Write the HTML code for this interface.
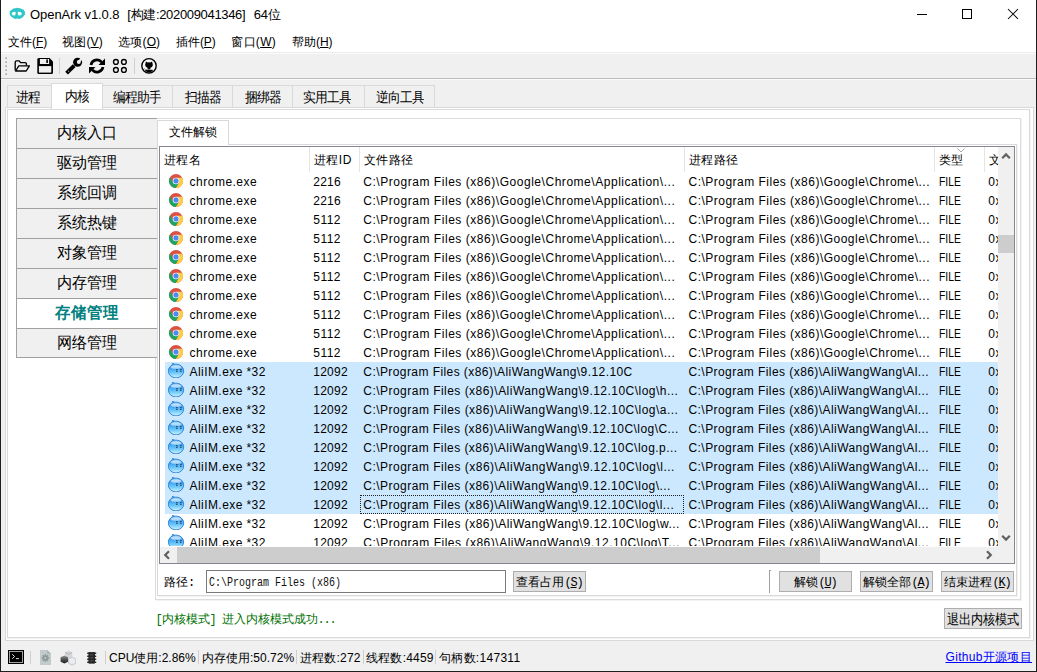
<!DOCTYPE html><html><head><meta charset="utf-8"><style>
*{box-sizing:border-box}
html,body{margin:0;padding:0}
body{width:1037px;height:672px;overflow:hidden;position:relative;background:#f0f0f0;font-family:"Liberation Sans",sans-serif;font-size:12px;color:#000}
.a{position:absolute}
.t{position:absolute;white-space:nowrap;line-height:1}
.m{font-family:"Liberation Mono",monospace;font-size:12px;letter-spacing:-1.2px}
u{text-decoration:underline;text-underline-offset:1px}
</style></head><body>

<div class="a" style="left:0px;top:0px;width:1px;height:672px;background:#1e1e1e"></div>
<div class="a" style="left:1036px;top:0px;width:1px;height:672px;background:#1e1e1e"></div>
<div class="a" style="left:0px;top:671px;width:1037px;height:1px;background:#1e1e1e"></div>
<div class="a" style="left:1px;top:0px;width:1035px;height:30px;background:#fff"></div>
<svg class="a" style="left:9px;top:7px" width="17" height="13" viewBox="0 0 17 13"><path d="M3 2.6Q4.5 1.2 6.5 1.3L8 0.7L10 1.2Q12 1.1 13.2 2.3L14.6 2.6L15.2 4.2L16.4 5L15.6 6.2L16.3 7.4L15 8.5Q14.3 10.6 12 11.3L10.5 11.9L8.2 11.5L6 11.9L4.4 11.1Q2.3 10.4 1.4 8.6L0.5 7.2L0.9 5.6L0.4 4.4L1.8 3.6Z" fill="#2ec6c9"/><path d="M2.6 6.6Q3.2 4.6 5.8 4.7L6.8 5.4L6.3 7.9Q4.8 8.9 3.3 8.1Z" fill="#fff"/><path d="M8.6 5.4L9.6 4.7Q12.3 4.6 12.9 6.6L12.3 8.1Q10.7 8.9 9.1 7.9Z" fill="#fff"/></svg>
<div class="t" style="left:30px;top:8px;font-size:13px;letter-spacing:-0.059px">OpenArk v1.0.8</div>
<div class="t" style="left:127.3px;top:8px;font-size:13px;letter-spacing:-0.330px">[构建:202009041346]</div>
<div class="t" style="left:253.8px;top:8px;font-size:13px;letter-spacing:-0.323px">64位</div>
<div class="a" style="left:917px;top:14px;width:10px;height:1px;background:#000"></div>
<div class="a" style="left:962px;top:9px;width:10px;height:10px;border:1px solid #000"></div>
<svg class="a" style="left:1007px;top:8px" width="12" height="12" viewBox="0 0 12 12"><path d="M1 1L11 11M11 1L1 11" stroke="#000" stroke-width="1.05"/></svg>
<div class="a" style="left:1px;top:30px;width:1035px;height:22px;background:#fff"></div>
<div class="t" style="left:8.3px;top:35.6px;;letter-spacing:-0.126px">文件(<u>F</u>)</div>
<div class="t" style="left:62.099999999999994px;top:35.6px;;letter-spacing:0.160px">视图(<u>V</u>)</div>
<div class="t" style="left:118.3px;top:35.6px;;letter-spacing:0.114px">选项(<u>O</u>)</div>
<div class="t" style="left:176.10000000000002px;top:35.6px;;letter-spacing:-0.080px">插件(<u>P</u>)</div>
<div class="t" style="left:231.3px;top:35.6px;;letter-spacing:0.274px">窗口(<u>W</u>)</div>
<div class="t" style="left:292.1px;top:35.6px;;letter-spacing:-0.074px">帮助(<u>H</u>)</div>
<div class="a" style="left:1px;top:52px;width:1035px;height:1px;background:#ececec"></div>
<div class="a" style="left:1px;top:53px;width:1035px;height:1px;background:#fbfbfb"></div>
<div class="a" style="left:1px;top:78px;width:1035px;height:1px;background:#bdbdbd"></div>
<div class="a" style="left:1px;top:79px;width:1035px;height:1px;background:#fafafa"></div>
<svg class="a" style="left:5px;top:57px" width="2" height="2" viewBox="0 0 2 2"><path d="M2 0V2H0Z" fill="#999"/><rect x="0" y="0" width="2" height="2" fill="#bbb" opacity="0.5"/></svg>
<svg class="a" style="left:5px;top:61px" width="2" height="2" viewBox="0 0 2 2"><path d="M2 0V2H0Z" fill="#999"/><rect x="0" y="0" width="2" height="2" fill="#bbb" opacity="0.5"/></svg>
<svg class="a" style="left:5px;top:65px" width="2" height="2" viewBox="0 0 2 2"><path d="M2 0V2H0Z" fill="#999"/><rect x="0" y="0" width="2" height="2" fill="#bbb" opacity="0.5"/></svg>
<svg class="a" style="left:5px;top:69px" width="2" height="2" viewBox="0 0 2 2"><path d="M2 0V2H0Z" fill="#999"/><rect x="0" y="0" width="2" height="2" fill="#bbb" opacity="0.5"/></svg>
<svg class="a" style="left:5px;top:73px" width="2" height="2" viewBox="0 0 2 2"><path d="M2 0V2H0Z" fill="#999"/><rect x="0" y="0" width="2" height="2" fill="#bbb" opacity="0.5"/></svg>
<div class="a" style="left:59px;top:58px;width:1px;height:16px;background:#cfcfcf"></div>
<div class="a" style="left:134px;top:58px;width:1px;height:16px;background:#cfcfcf"></div>
<svg class="a" style="left:10px;top:54px" width="24" height="24" viewBox="0 0 24 24"><g fill="none" stroke="#000" stroke-width="1.35" stroke-linejoin="round"><path d="M5.2 16.5V8.2Q5.2 6.8 6.6 6.8H9.2L10.6 8.6H15.2Q16.4 8.6 16.4 9.8V11.6"/><path d="M5.6 17L8.8 11.8H19.4L16.2 17Z"/></g></svg>
<svg class="a" style="left:37px;top:58px" width="16" height="16" viewBox="0 0 16 16"><path d="M0.3 1.6Q0.3 0 1.9 0H12.6L16 3.4V14.4Q16 16 14.4 16H1.9Q0.3 16 0.3 14.4Z" fill="#000"/><rect x="2.9" y="1" width="9.2" height="5" fill="#f0f0f0"/><rect x="9.3" y="1.4" width="1.6" height="3.6" fill="#000"/><rect x="1.9" y="8.1" width="12.4" height="6.5" fill="#f0f0f0"/></svg>
<svg class="a" style="left:62px;top:54px" width="24" height="24" viewBox="0 0 24 24"><path d="M4.6 19.2L12.2 11.6" stroke="#000" stroke-width="3.9"/><circle cx="15.6" cy="8.3" r="4.5" fill="#000"/><circle cx="16.8" cy="7.9" r="2.0" fill="#f0f0f0"/><path d="M15.95 7.2L19.8 2.58L21.5 3.98L17.65 8.6Z" fill="#f0f0f0"/><circle cx="6.6" cy="17.2" r="0.75" fill="#888"/></svg>
<svg class="a" style="left:85px;top:54px" width="24" height="24" viewBox="0 0 24 24"><g fill="none" stroke="#000" stroke-width="2.7"><path d="M5.99 10.94A6.1 6.1 0 0 1 16.67 8.08"/><path d="M18.01 13.06A6.1 6.1 0 0 1 7.33 15.92"/></g><path d="M20 4.5V11H13.5Z" fill="#000"/><path d="M4 19.5V13H10.5Z" fill="#000"/></svg>
<svg class="a" style="left:108px;top:54px" width="24" height="24" viewBox="0 0 24 24"><g fill="none" stroke="#000" stroke-width="1.35"><circle cx="7.9" cy="7.9" r="2.4"/><circle cx="15.9" cy="7.9" r="2.4"/><circle cx="7.9" cy="15.9" r="2.4"/><circle cx="15.9" cy="15.9" r="2.4"/></g></svg>
<svg class="a" style="left:137px;top:54px" width="24" height="24" viewBox="0 0 24 24"><circle cx="12" cy="11.8" r="7.2" fill="#f8f8f8" stroke="#000" stroke-width="1.4"/><path d="M8.7 8.4L9 7.4L10.7 8.4Q12 8.1 13.3 8.4L15 7.4L15.3 8.4Q16.3 10.4 15.5 12.3Q14.7 13.6 13.4 13.8V15.4H10.6V13.8Q9.3 13.6 8.5 12.3Q7.7 10.4 8.7 8.4Z" fill="#000"/><path d="M8 17Q12 19.6 16 17L15.2 15.6Q12 16.6 8.8 15.6Z" fill="#000"/><path d="M7 14.3Q8 15.8 10.4 15.6" stroke="#888" stroke-width="0.9" fill="none"/></svg>
<div class="a" style="left:5px;top:107px;width:1029px;height:534px;background:#fff;border:1px solid #d9d9d9"></div>
<div class="a" style="left:7px;top:109px;width:1023px;height:529px;border:1px solid #dadada"></div>
<div class="a" style="left:1030px;top:110px;width:1px;height:529px;background:#f2f2f2"></div>
<div class="a" style="left:8px;top:638px;width:1023px;height:1px;background:#f2f2f2"></div>
<div class="a" style="left:7px;top:85px;width:45px;height:22px;background:#f0f0f0;border:1px solid #d9d9d9;border-bottom:none"></div>
<div class="t" style="left:5px;top:90.5px;width:45px;text-align:center;font-size:12.3px;transform:scaleY(1.1);transform-origin:50% 0">进程</div>
<div class="a" style="left:51px;top:83px;width:52px;height:26px;background:#fff;border:1px solid #d9d9d9;border-bottom:none"></div>
<div class="t" style="left:51px;top:90px;width:52px;text-align:center;font-size:12.3px;transform:scaleY(1.1);transform-origin:50% 0">内核</div>
<div class="a" style="left:102px;top:85px;width:71px;height:22px;background:#f0f0f0;border:1px solid #d9d9d9;border-bottom:none"></div>
<div class="t" style="left:101px;top:90.5px;width:71px;text-align:center;font-size:12.3px;transform:scaleY(1.1);transform-origin:50% 0">编程助手</div>
<div class="a" style="left:172px;top:85px;width:61px;height:22px;background:#f0f0f0;border:1px solid #d9d9d9;border-bottom:none"></div>
<div class="t" style="left:172px;top:90.5px;width:61px;text-align:center;font-size:12.3px;transform:scaleY(1.1);transform-origin:50% 0">扫描器</div>
<div class="a" style="left:232px;top:85px;width:61px;height:22px;background:#f0f0f0;border:1px solid #d9d9d9;border-bottom:none"></div>
<div class="t" style="left:232px;top:90.5px;width:61px;text-align:center;font-size:12.3px;transform:scaleY(1.1);transform-origin:50% 0">捆绑器</div>
<div class="a" style="left:292px;top:85px;width:73px;height:22px;background:#f0f0f0;border:1px solid #d9d9d9;border-bottom:none"></div>
<div class="t" style="left:290.5px;top:90.5px;width:73px;text-align:center;font-size:12.3px;transform:scaleY(1.1);transform-origin:50% 0">实用工具</div>
<div class="a" style="left:364px;top:85px;width:71px;height:22px;background:#f0f0f0;border:1px solid #d9d9d9;border-bottom:none"></div>
<div class="t" style="left:364px;top:90.5px;width:71px;text-align:center;font-size:12.3px;transform:scaleY(1.1);transform-origin:50% 0">逆向工具</div>
<div class="a" style="left:155px;top:118px;width:866px;height:482px;border:1px solid #dcdcdc"></div>
<div class="a" style="left:1021px;top:119px;width:1px;height:482px;background:#f3f3f3"></div>
<div class="a" style="left:156px;top:600px;width:866px;height:1px;background:#f3f3f3"></div>
<div class="a" style="left:16px;top:118px;width:141px;height:240px;background:#f0f0f0;border:1px solid #a0a0a0;border-right:none"></div>
<div class="t" style="left:16px;top:124px;width:141px;text-align:center;font-size:15px;transform:scaleY(1.06);transform-origin:50% 0">内核入口</div>
<div class="a" style="left:17px;top:148px;width:140px;height:1px;background:#a0a0a0"></div>
<div class="t" style="left:16px;top:154px;width:141px;text-align:center;font-size:15px;transform:scaleY(1.06);transform-origin:50% 0">驱动管理</div>
<div class="a" style="left:17px;top:178px;width:140px;height:1px;background:#a0a0a0"></div>
<div class="t" style="left:16px;top:184px;width:141px;text-align:center;font-size:15px;transform:scaleY(1.06);transform-origin:50% 0">系统回调</div>
<div class="a" style="left:17px;top:208px;width:140px;height:1px;background:#a0a0a0"></div>
<div class="t" style="left:16px;top:214px;width:141px;text-align:center;font-size:15px;transform:scaleY(1.06);transform-origin:50% 0">系统热键</div>
<div class="a" style="left:17px;top:238px;width:140px;height:1px;background:#a0a0a0"></div>
<div class="t" style="left:16px;top:244px;width:141px;text-align:center;font-size:15px;transform:scaleY(1.06);transform-origin:50% 0">对象管理</div>
<div class="a" style="left:17px;top:268px;width:140px;height:1px;background:#a0a0a0"></div>
<div class="t" style="left:16px;top:274px;width:141px;text-align:center;font-size:15px;transform:scaleY(1.06);transform-origin:50% 0">内存管理</div>
<div class="a" style="left:17px;top:298px;width:140px;height:1px;background:#a0a0a0"></div>
<div class="a" style="left:17px;top:299px;width:140px;height:29px;background:#fff"></div>
<div class="t" style="left:16px;top:304px;width:141px;text-align:center;color:#008080;font-weight:bold;font-size:15.5px;transform:scaleY(1.04);transform-origin:50% 0">存储管理</div>
<div class="a" style="left:17px;top:328px;width:140px;height:1px;background:#a0a0a0"></div>
<div class="t" style="left:16px;top:334px;width:141px;text-align:center;font-size:15px;transform:scaleY(1.06);transform-origin:50% 0">网络管理</div>
<div class="a" style="left:157px;top:144px;width:860px;height:452px;background:#fff;border:1px solid #d9d9d9"></div>
<div class="a" style="left:1017px;top:145px;width:1px;height:452px;background:#f3f3f3"></div>
<div class="a" style="left:158px;top:596px;width:860px;height:1px;background:#f3f3f3"></div>
<div class="a" style="left:157px;top:120px;width:72px;height:25px;background:#fff;border:1px solid #d9d9d9;border-bottom:none"></div>
<div class="t" style="left:157px;top:126px;width:72px;text-align:center;font-size:12px;letter-spacing:0.3px;padding-left:0.3px">文件解锁</div>
<div class="a" style="left:159px;top:146px;width:856px;height:418px;background:#fff;border:1px solid #828790"></div>
<div class="a" style="left:160px;top:147px;width:838px;height:399px;overflow:hidden">
<div class="t" style="left:3.8000000000000114px;top:6.599999999999994px;font-size:12px;letter-spacing:0.5px">进程名</div>
<div class="a" style="left:149px;top:0px;width:1px;height:25px;background:#e5e5e5"></div>
<div class="t" style="left:153.8px;top:6.599999999999994px;font-size:12px;letter-spacing:0.5px">进程ID</div>
<div class="a" style="left:199px;top:0px;width:1px;height:25px;background:#e5e5e5"></div>
<div class="t" style="left:203.8px;top:6.599999999999994px;font-size:12px;letter-spacing:0.5px">文件路径</div>
<div class="a" style="left:524px;top:0px;width:1px;height:25px;background:#e5e5e5"></div>
<div class="t" style="left:528.8px;top:6.599999999999994px;font-size:12px;letter-spacing:0.5px">进程路径</div>
<div class="a" style="left:774px;top:0px;width:1px;height:25px;background:#e5e5e5"></div>
<div class="t" style="left:778.8px;top:6.599999999999994px;font-size:12px;letter-spacing:0.5px">类型</div>
<div class="a" style="left:824px;top:0px;width:1px;height:25px;background:#e5e5e5"></div>
<div class="t" style="left:828.8px;top:6.599999999999994px;font-size:12px;letter-spacing:0.5px">文</div>
<svg class="a" style="left:797px;top:1px" width="8" height="5" viewBox="0 0 8 5"><path d="M0.5 0.5L4 4L7.5 0.5" fill="none" stroke="#a8a8a8" stroke-width="1"/></svg>
<div class="a" style="left:9px;top:27px;width:14px;height:14px"><svg width="14" height="14" viewBox="0 0 14 14"><circle cx="7" cy="7" r="6.95" fill="#dd5044"/><path d="M7.00 3.70L13.12 3.70A6.95 6.95 0 0 1 6.80 13.95L9.86 8.65L7 7Z" fill="#ffcd40"/><path d="M6.80 13.95A6.95 6.95 0 0 1 1.08 3.35L4.14 8.65L7 7L9.86 8.65Z" fill="#1da462"/><circle cx="7" cy="7" r="3.3" fill="#fff"/><circle cx="7" cy="6.9" r="2.6" fill="#4c8bf5"/></svg></div>
<div class="t" style="left:29.599999999999994px;top:29px;font-size:12px;letter-spacing:0.490px">chrome.exe</div>
<div class="t" style="left:153.3px;top:29px;font-size:12px;letter-spacing:0.224px">2216</div>
<div class="t" style="left:203.3px;top:29px;font-size:12px;letter-spacing:0.536px">C:\Program Files (x86)\Google\Chrome\Application\...</div>
<div class="t" style="left:528.5px;top:29px;font-size:12px;letter-spacing:0.486px">C:\Program Files (x86)\Google\Chrome\...</div>
<div class="t" style="left:778.5px;top:29px;font-size:12px;transform:scaleX(0.86);transform-origin:0 0">FILE</div>
<div class="t" style="left:828.3px;top:29px;font-size:12px;letter-spacing:0.6px">0x0000</div>
<div class="a" style="left:9px;top:46px;width:14px;height:14px"><svg width="14" height="14" viewBox="0 0 14 14"><circle cx="7" cy="7" r="6.95" fill="#dd5044"/><path d="M7.00 3.70L13.12 3.70A6.95 6.95 0 0 1 6.80 13.95L9.86 8.65L7 7Z" fill="#ffcd40"/><path d="M6.80 13.95A6.95 6.95 0 0 1 1.08 3.35L4.14 8.65L7 7L9.86 8.65Z" fill="#1da462"/><circle cx="7" cy="7" r="3.3" fill="#fff"/><circle cx="7" cy="6.9" r="2.6" fill="#4c8bf5"/></svg></div>
<div class="t" style="left:29.599999999999994px;top:48px;font-size:12px;letter-spacing:0.490px">chrome.exe</div>
<div class="t" style="left:153.3px;top:48px;font-size:12px;letter-spacing:0.224px">2216</div>
<div class="t" style="left:203.3px;top:48px;font-size:12px;letter-spacing:0.536px">C:\Program Files (x86)\Google\Chrome\Application\...</div>
<div class="t" style="left:528.5px;top:48px;font-size:12px;letter-spacing:0.486px">C:\Program Files (x86)\Google\Chrome\...</div>
<div class="t" style="left:778.5px;top:48px;font-size:12px;transform:scaleX(0.86);transform-origin:0 0">FILE</div>
<div class="t" style="left:828.3px;top:48px;font-size:12px;letter-spacing:0.6px">0x0000</div>
<div class="a" style="left:9px;top:65px;width:14px;height:14px"><svg width="14" height="14" viewBox="0 0 14 14"><circle cx="7" cy="7" r="6.95" fill="#dd5044"/><path d="M7.00 3.70L13.12 3.70A6.95 6.95 0 0 1 6.80 13.95L9.86 8.65L7 7Z" fill="#ffcd40"/><path d="M6.80 13.95A6.95 6.95 0 0 1 1.08 3.35L4.14 8.65L7 7L9.86 8.65Z" fill="#1da462"/><circle cx="7" cy="7" r="3.3" fill="#fff"/><circle cx="7" cy="6.9" r="2.6" fill="#4c8bf5"/></svg></div>
<div class="t" style="left:29.599999999999994px;top:67px;font-size:12px;letter-spacing:0.490px">chrome.exe</div>
<div class="t" style="left:153.3px;top:67px;font-size:12px;letter-spacing:0.447px">5112</div>
<div class="t" style="left:203.3px;top:67px;font-size:12px;letter-spacing:0.536px">C:\Program Files (x86)\Google\Chrome\Application\...</div>
<div class="t" style="left:528.5px;top:67px;font-size:12px;letter-spacing:0.486px">C:\Program Files (x86)\Google\Chrome\...</div>
<div class="t" style="left:778.5px;top:67px;font-size:12px;transform:scaleX(0.86);transform-origin:0 0">FILE</div>
<div class="t" style="left:828.3px;top:67px;font-size:12px;letter-spacing:0.6px">0x0000</div>
<div class="a" style="left:9px;top:84px;width:14px;height:14px"><svg width="14" height="14" viewBox="0 0 14 14"><circle cx="7" cy="7" r="6.95" fill="#dd5044"/><path d="M7.00 3.70L13.12 3.70A6.95 6.95 0 0 1 6.80 13.95L9.86 8.65L7 7Z" fill="#ffcd40"/><path d="M6.80 13.95A6.95 6.95 0 0 1 1.08 3.35L4.14 8.65L7 7L9.86 8.65Z" fill="#1da462"/><circle cx="7" cy="7" r="3.3" fill="#fff"/><circle cx="7" cy="6.9" r="2.6" fill="#4c8bf5"/></svg></div>
<div class="t" style="left:29.599999999999994px;top:86px;font-size:12px;letter-spacing:0.490px">chrome.exe</div>
<div class="t" style="left:153.3px;top:86px;font-size:12px;letter-spacing:0.447px">5112</div>
<div class="t" style="left:203.3px;top:86px;font-size:12px;letter-spacing:0.536px">C:\Program Files (x86)\Google\Chrome\Application\...</div>
<div class="t" style="left:528.5px;top:86px;font-size:12px;letter-spacing:0.486px">C:\Program Files (x86)\Google\Chrome\...</div>
<div class="t" style="left:778.5px;top:86px;font-size:12px;transform:scaleX(0.86);transform-origin:0 0">FILE</div>
<div class="t" style="left:828.3px;top:86px;font-size:12px;letter-spacing:0.6px">0x0000</div>
<div class="a" style="left:9px;top:103px;width:14px;height:14px"><svg width="14" height="14" viewBox="0 0 14 14"><circle cx="7" cy="7" r="6.95" fill="#dd5044"/><path d="M7.00 3.70L13.12 3.70A6.95 6.95 0 0 1 6.80 13.95L9.86 8.65L7 7Z" fill="#ffcd40"/><path d="M6.80 13.95A6.95 6.95 0 0 1 1.08 3.35L4.14 8.65L7 7L9.86 8.65Z" fill="#1da462"/><circle cx="7" cy="7" r="3.3" fill="#fff"/><circle cx="7" cy="6.9" r="2.6" fill="#4c8bf5"/></svg></div>
<div class="t" style="left:29.599999999999994px;top:105px;font-size:12px;letter-spacing:0.490px">chrome.exe</div>
<div class="t" style="left:153.3px;top:105px;font-size:12px;letter-spacing:0.447px">5112</div>
<div class="t" style="left:203.3px;top:105px;font-size:12px;letter-spacing:0.536px">C:\Program Files (x86)\Google\Chrome\Application\...</div>
<div class="t" style="left:528.5px;top:105px;font-size:12px;letter-spacing:0.486px">C:\Program Files (x86)\Google\Chrome\...</div>
<div class="t" style="left:778.5px;top:105px;font-size:12px;transform:scaleX(0.86);transform-origin:0 0">FILE</div>
<div class="t" style="left:828.3px;top:105px;font-size:12px;letter-spacing:0.6px">0x0000</div>
<div class="a" style="left:9px;top:122px;width:14px;height:14px"><svg width="14" height="14" viewBox="0 0 14 14"><circle cx="7" cy="7" r="6.95" fill="#dd5044"/><path d="M7.00 3.70L13.12 3.70A6.95 6.95 0 0 1 6.80 13.95L9.86 8.65L7 7Z" fill="#ffcd40"/><path d="M6.80 13.95A6.95 6.95 0 0 1 1.08 3.35L4.14 8.65L7 7L9.86 8.65Z" fill="#1da462"/><circle cx="7" cy="7" r="3.3" fill="#fff"/><circle cx="7" cy="6.9" r="2.6" fill="#4c8bf5"/></svg></div>
<div class="t" style="left:29.599999999999994px;top:124px;font-size:12px;letter-spacing:0.490px">chrome.exe</div>
<div class="t" style="left:153.3px;top:124px;font-size:12px;letter-spacing:0.447px">5112</div>
<div class="t" style="left:203.3px;top:124px;font-size:12px;letter-spacing:0.536px">C:\Program Files (x86)\Google\Chrome\Application\...</div>
<div class="t" style="left:528.5px;top:124px;font-size:12px;letter-spacing:0.486px">C:\Program Files (x86)\Google\Chrome\...</div>
<div class="t" style="left:778.5px;top:124px;font-size:12px;transform:scaleX(0.86);transform-origin:0 0">FILE</div>
<div class="t" style="left:828.3px;top:124px;font-size:12px;letter-spacing:0.6px">0x0000</div>
<div class="a" style="left:9px;top:141px;width:14px;height:14px"><svg width="14" height="14" viewBox="0 0 14 14"><circle cx="7" cy="7" r="6.95" fill="#dd5044"/><path d="M7.00 3.70L13.12 3.70A6.95 6.95 0 0 1 6.80 13.95L9.86 8.65L7 7Z" fill="#ffcd40"/><path d="M6.80 13.95A6.95 6.95 0 0 1 1.08 3.35L4.14 8.65L7 7L9.86 8.65Z" fill="#1da462"/><circle cx="7" cy="7" r="3.3" fill="#fff"/><circle cx="7" cy="6.9" r="2.6" fill="#4c8bf5"/></svg></div>
<div class="t" style="left:29.599999999999994px;top:143px;font-size:12px;letter-spacing:0.490px">chrome.exe</div>
<div class="t" style="left:153.3px;top:143px;font-size:12px;letter-spacing:0.447px">5112</div>
<div class="t" style="left:203.3px;top:143px;font-size:12px;letter-spacing:0.536px">C:\Program Files (x86)\Google\Chrome\Application\...</div>
<div class="t" style="left:528.5px;top:143px;font-size:12px;letter-spacing:0.486px">C:\Program Files (x86)\Google\Chrome\...</div>
<div class="t" style="left:778.5px;top:143px;font-size:12px;transform:scaleX(0.86);transform-origin:0 0">FILE</div>
<div class="t" style="left:828.3px;top:143px;font-size:12px;letter-spacing:0.6px">0x0000</div>
<div class="a" style="left:9px;top:160px;width:14px;height:14px"><svg width="14" height="14" viewBox="0 0 14 14"><circle cx="7" cy="7" r="6.95" fill="#dd5044"/><path d="M7.00 3.70L13.12 3.70A6.95 6.95 0 0 1 6.80 13.95L9.86 8.65L7 7Z" fill="#ffcd40"/><path d="M6.80 13.95A6.95 6.95 0 0 1 1.08 3.35L4.14 8.65L7 7L9.86 8.65Z" fill="#1da462"/><circle cx="7" cy="7" r="3.3" fill="#fff"/><circle cx="7" cy="6.9" r="2.6" fill="#4c8bf5"/></svg></div>
<div class="t" style="left:29.599999999999994px;top:162px;font-size:12px;letter-spacing:0.490px">chrome.exe</div>
<div class="t" style="left:153.3px;top:162px;font-size:12px;letter-spacing:0.447px">5112</div>
<div class="t" style="left:203.3px;top:162px;font-size:12px;letter-spacing:0.536px">C:\Program Files (x86)\Google\Chrome\Application\...</div>
<div class="t" style="left:528.5px;top:162px;font-size:12px;letter-spacing:0.486px">C:\Program Files (x86)\Google\Chrome\...</div>
<div class="t" style="left:778.5px;top:162px;font-size:12px;transform:scaleX(0.86);transform-origin:0 0">FILE</div>
<div class="t" style="left:828.3px;top:162px;font-size:12px;letter-spacing:0.6px">0x0000</div>
<div class="a" style="left:9px;top:179px;width:14px;height:14px"><svg width="14" height="14" viewBox="0 0 14 14"><circle cx="7" cy="7" r="6.95" fill="#dd5044"/><path d="M7.00 3.70L13.12 3.70A6.95 6.95 0 0 1 6.80 13.95L9.86 8.65L7 7Z" fill="#ffcd40"/><path d="M6.80 13.95A6.95 6.95 0 0 1 1.08 3.35L4.14 8.65L7 7L9.86 8.65Z" fill="#1da462"/><circle cx="7" cy="7" r="3.3" fill="#fff"/><circle cx="7" cy="6.9" r="2.6" fill="#4c8bf5"/></svg></div>
<div class="t" style="left:29.599999999999994px;top:181px;font-size:12px;letter-spacing:0.490px">chrome.exe</div>
<div class="t" style="left:153.3px;top:181px;font-size:12px;letter-spacing:0.447px">5112</div>
<div class="t" style="left:203.3px;top:181px;font-size:12px;letter-spacing:0.536px">C:\Program Files (x86)\Google\Chrome\Application\...</div>
<div class="t" style="left:528.5px;top:181px;font-size:12px;letter-spacing:0.486px">C:\Program Files (x86)\Google\Chrome\...</div>
<div class="t" style="left:778.5px;top:181px;font-size:12px;transform:scaleX(0.86);transform-origin:0 0">FILE</div>
<div class="t" style="left:828.3px;top:181px;font-size:12px;letter-spacing:0.6px">0x0000</div>
<div class="a" style="left:9px;top:198px;width:14px;height:14px"><svg width="14" height="14" viewBox="0 0 14 14"><circle cx="7" cy="7" r="6.95" fill="#dd5044"/><path d="M7.00 3.70L13.12 3.70A6.95 6.95 0 0 1 6.80 13.95L9.86 8.65L7 7Z" fill="#ffcd40"/><path d="M6.80 13.95A6.95 6.95 0 0 1 1.08 3.35L4.14 8.65L7 7L9.86 8.65Z" fill="#1da462"/><circle cx="7" cy="7" r="3.3" fill="#fff"/><circle cx="7" cy="6.9" r="2.6" fill="#4c8bf5"/></svg></div>
<div class="t" style="left:29.599999999999994px;top:200px;font-size:12px;letter-spacing:0.490px">chrome.exe</div>
<div class="t" style="left:153.3px;top:200px;font-size:12px;letter-spacing:0.447px">5112</div>
<div class="t" style="left:203.3px;top:200px;font-size:12px;letter-spacing:0.536px">C:\Program Files (x86)\Google\Chrome\Application\...</div>
<div class="t" style="left:528.5px;top:200px;font-size:12px;letter-spacing:0.486px">C:\Program Files (x86)\Google\Chrome\...</div>
<div class="t" style="left:778.5px;top:200px;font-size:12px;transform:scaleX(0.86);transform-origin:0 0">FILE</div>
<div class="t" style="left:828.3px;top:200px;font-size:12px;letter-spacing:0.6px">0x0000</div>
<div class="a" style="left:5px;top:215px;width:833px;height:19px;background:#cce8ff"></div>
<div class="a" style="left:8px;top:215px;width:17px;height:16px"><svg width="17" height="16" viewBox="0 0 17 16"><defs><linearGradient id="ag" x1="0" y1="0" x2="0" y2="1"><stop offset="0" stop-color="#a8dcff"/><stop offset="0.3" stop-color="#3ea0ee"/><stop offset="0.65" stop-color="#70cbfa"/><stop offset="1" stop-color="#d4f3ff"/></linearGradient></defs><path d="M3.6 3.2L4.2 0.9L6.8 1.6Z" fill="#2a86dc"/><ellipse cx="8" cy="9" rx="7.7" ry="6.9" fill="url(#ag)" stroke="#2a7fd6" stroke-width="0.9"/><ellipse cx="8" cy="5.2" rx="5" ry="1.6" fill="#fff" opacity="0.55"/><g fill="#0a1a30"><rect x="8.4" y="7" width="1" height="1.2"/><rect x="8.4" y="8.8" width="1" height="1.2"/><rect x="12.4" y="7" width="1" height="1.2"/><rect x="12.4" y="8.8" width="1" height="1.2"/></g></svg></div>
<div class="t" style="left:29.599999999999994px;top:219px;font-size:12px;letter-spacing:0.423px">AliIM.exe *32</div>
<div class="t" style="left:153.3px;top:219px;font-size:12px;letter-spacing:0.225px">12092</div>
<div class="t" style="left:203.3px;top:219px;font-size:12px;letter-spacing:0.423px">C:\Program Files (x86)\AliWangWang\9.12.10C</div>
<div class="t" style="left:528.5px;top:219px;font-size:12px;letter-spacing:0.436px">C:\Program Files (x86)\AliWangWang\Al...</div>
<div class="t" style="left:778.5px;top:219px;font-size:12px;transform:scaleX(0.86);transform-origin:0 0">FILE</div>
<div class="t" style="left:828.3px;top:219px;font-size:12px;letter-spacing:0.6px">0x0000</div>
<div class="a" style="left:5px;top:234px;width:833px;height:19px;background:#cce8ff"></div>
<div class="a" style="left:8px;top:234px;width:17px;height:16px"><svg width="17" height="16" viewBox="0 0 17 16"><defs><linearGradient id="ag" x1="0" y1="0" x2="0" y2="1"><stop offset="0" stop-color="#a8dcff"/><stop offset="0.3" stop-color="#3ea0ee"/><stop offset="0.65" stop-color="#70cbfa"/><stop offset="1" stop-color="#d4f3ff"/></linearGradient></defs><path d="M3.6 3.2L4.2 0.9L6.8 1.6Z" fill="#2a86dc"/><ellipse cx="8" cy="9" rx="7.7" ry="6.9" fill="url(#ag)" stroke="#2a7fd6" stroke-width="0.9"/><ellipse cx="8" cy="5.2" rx="5" ry="1.6" fill="#fff" opacity="0.55"/><g fill="#0a1a30"><rect x="8.4" y="7" width="1" height="1.2"/><rect x="8.4" y="8.8" width="1" height="1.2"/><rect x="12.4" y="7" width="1" height="1.2"/><rect x="12.4" y="8.8" width="1" height="1.2"/></g></svg></div>
<div class="t" style="left:29.599999999999994px;top:238px;font-size:12px;letter-spacing:0.423px">AliIM.exe *32</div>
<div class="t" style="left:153.3px;top:238px;font-size:12px;letter-spacing:0.225px">12092</div>
<div class="t" style="left:203.3px;top:238px;font-size:12px;letter-spacing:0.470px">C:\Program Files (x86)\AliWangWang\9.12.10C\log\h...</div>
<div class="t" style="left:528.5px;top:238px;font-size:12px;letter-spacing:0.436px">C:\Program Files (x86)\AliWangWang\Al...</div>
<div class="t" style="left:778.5px;top:238px;font-size:12px;transform:scaleX(0.86);transform-origin:0 0">FILE</div>
<div class="t" style="left:828.3px;top:238px;font-size:12px;letter-spacing:0.6px">0x0000</div>
<div class="a" style="left:5px;top:253px;width:833px;height:19px;background:#cce8ff"></div>
<div class="a" style="left:8px;top:253px;width:17px;height:16px"><svg width="17" height="16" viewBox="0 0 17 16"><defs><linearGradient id="ag" x1="0" y1="0" x2="0" y2="1"><stop offset="0" stop-color="#a8dcff"/><stop offset="0.3" stop-color="#3ea0ee"/><stop offset="0.65" stop-color="#70cbfa"/><stop offset="1" stop-color="#d4f3ff"/></linearGradient></defs><path d="M3.6 3.2L4.2 0.9L6.8 1.6Z" fill="#2a86dc"/><ellipse cx="8" cy="9" rx="7.7" ry="6.9" fill="url(#ag)" stroke="#2a7fd6" stroke-width="0.9"/><ellipse cx="8" cy="5.2" rx="5" ry="1.6" fill="#fff" opacity="0.55"/><g fill="#0a1a30"><rect x="8.4" y="7" width="1" height="1.2"/><rect x="8.4" y="8.8" width="1" height="1.2"/><rect x="12.4" y="7" width="1" height="1.2"/><rect x="12.4" y="8.8" width="1" height="1.2"/></g></svg></div>
<div class="t" style="left:29.599999999999994px;top:257px;font-size:12px;letter-spacing:0.423px">AliIM.exe *32</div>
<div class="t" style="left:153.3px;top:257px;font-size:12px;letter-spacing:0.225px">12092</div>
<div class="t" style="left:203.3px;top:257px;font-size:12px;letter-spacing:0.470px">C:\Program Files (x86)\AliWangWang\9.12.10C\log\a...</div>
<div class="t" style="left:528.5px;top:257px;font-size:12px;letter-spacing:0.436px">C:\Program Files (x86)\AliWangWang\Al...</div>
<div class="t" style="left:778.5px;top:257px;font-size:12px;transform:scaleX(0.86);transform-origin:0 0">FILE</div>
<div class="t" style="left:828.3px;top:257px;font-size:12px;letter-spacing:0.6px">0x0000</div>
<div class="a" style="left:5px;top:272px;width:833px;height:19px;background:#cce8ff"></div>
<div class="a" style="left:8px;top:272px;width:17px;height:16px"><svg width="17" height="16" viewBox="0 0 17 16"><defs><linearGradient id="ag" x1="0" y1="0" x2="0" y2="1"><stop offset="0" stop-color="#a8dcff"/><stop offset="0.3" stop-color="#3ea0ee"/><stop offset="0.65" stop-color="#70cbfa"/><stop offset="1" stop-color="#d4f3ff"/></linearGradient></defs><path d="M3.6 3.2L4.2 0.9L6.8 1.6Z" fill="#2a86dc"/><ellipse cx="8" cy="9" rx="7.7" ry="6.9" fill="url(#ag)" stroke="#2a7fd6" stroke-width="0.9"/><ellipse cx="8" cy="5.2" rx="5" ry="1.6" fill="#fff" opacity="0.55"/><g fill="#0a1a30"><rect x="8.4" y="7" width="1" height="1.2"/><rect x="8.4" y="8.8" width="1" height="1.2"/><rect x="12.4" y="7" width="1" height="1.2"/><rect x="12.4" y="8.8" width="1" height="1.2"/></g></svg></div>
<div class="t" style="left:29.599999999999994px;top:276px;font-size:12px;letter-spacing:0.423px">AliIM.exe *32</div>
<div class="t" style="left:153.3px;top:276px;font-size:12px;letter-spacing:0.225px">12092</div>
<div class="t" style="left:203.3px;top:276px;font-size:12px;letter-spacing:0.443px">C:\Program Files (x86)\AliWangWang\9.12.10C\log\C...</div>
<div class="t" style="left:528.5px;top:276px;font-size:12px;letter-spacing:0.436px">C:\Program Files (x86)\AliWangWang\Al...</div>
<div class="t" style="left:778.5px;top:276px;font-size:12px;transform:scaleX(0.86);transform-origin:0 0">FILE</div>
<div class="t" style="left:828.3px;top:276px;font-size:12px;letter-spacing:0.6px">0x0000</div>
<div class="a" style="left:5px;top:291px;width:833px;height:19px;background:#cce8ff"></div>
<div class="a" style="left:8px;top:291px;width:17px;height:16px"><svg width="17" height="16" viewBox="0 0 17 16"><defs><linearGradient id="ag" x1="0" y1="0" x2="0" y2="1"><stop offset="0" stop-color="#a8dcff"/><stop offset="0.3" stop-color="#3ea0ee"/><stop offset="0.65" stop-color="#70cbfa"/><stop offset="1" stop-color="#d4f3ff"/></linearGradient></defs><path d="M3.6 3.2L4.2 0.9L6.8 1.6Z" fill="#2a86dc"/><ellipse cx="8" cy="9" rx="7.7" ry="6.9" fill="url(#ag)" stroke="#2a7fd6" stroke-width="0.9"/><ellipse cx="8" cy="5.2" rx="5" ry="1.6" fill="#fff" opacity="0.55"/><g fill="#0a1a30"><rect x="8.4" y="7" width="1" height="1.2"/><rect x="8.4" y="8.8" width="1" height="1.2"/><rect x="12.4" y="7" width="1" height="1.2"/><rect x="12.4" y="8.8" width="1" height="1.2"/></g></svg></div>
<div class="t" style="left:29.599999999999994px;top:295px;font-size:12px;letter-spacing:0.423px">AliIM.exe *32</div>
<div class="t" style="left:153.3px;top:295px;font-size:12px;letter-spacing:0.225px">12092</div>
<div class="t" style="left:203.3px;top:295px;font-size:12px;letter-spacing:0.456px">C:\Program Files (x86)\AliWangWang\9.12.10C\log.p...</div>
<div class="t" style="left:528.5px;top:295px;font-size:12px;letter-spacing:0.436px">C:\Program Files (x86)\AliWangWang\Al...</div>
<div class="t" style="left:778.5px;top:295px;font-size:12px;transform:scaleX(0.86);transform-origin:0 0">FILE</div>
<div class="t" style="left:828.3px;top:295px;font-size:12px;letter-spacing:0.6px">0x0000</div>
<div class="a" style="left:5px;top:310px;width:833px;height:19px;background:#cce8ff"></div>
<div class="a" style="left:8px;top:310px;width:17px;height:16px"><svg width="17" height="16" viewBox="0 0 17 16"><defs><linearGradient id="ag" x1="0" y1="0" x2="0" y2="1"><stop offset="0" stop-color="#a8dcff"/><stop offset="0.3" stop-color="#3ea0ee"/><stop offset="0.65" stop-color="#70cbfa"/><stop offset="1" stop-color="#d4f3ff"/></linearGradient></defs><path d="M3.6 3.2L4.2 0.9L6.8 1.6Z" fill="#2a86dc"/><ellipse cx="8" cy="9" rx="7.7" ry="6.9" fill="url(#ag)" stroke="#2a7fd6" stroke-width="0.9"/><ellipse cx="8" cy="5.2" rx="5" ry="1.6" fill="#fff" opacity="0.55"/><g fill="#0a1a30"><rect x="8.4" y="7" width="1" height="1.2"/><rect x="8.4" y="8.8" width="1" height="1.2"/><rect x="12.4" y="7" width="1" height="1.2"/><rect x="12.4" y="8.8" width="1" height="1.2"/></g></svg></div>
<div class="t" style="left:29.599999999999994px;top:314px;font-size:12px;letter-spacing:0.423px">AliIM.exe *32</div>
<div class="t" style="left:153.3px;top:314px;font-size:12px;letter-spacing:0.225px">12092</div>
<div class="t" style="left:203.3px;top:314px;font-size:12px;letter-spacing:0.481px">C:\Program Files (x86)\AliWangWang\9.12.10C\log\l...</div>
<div class="t" style="left:528.5px;top:314px;font-size:12px;letter-spacing:0.436px">C:\Program Files (x86)\AliWangWang\Al...</div>
<div class="t" style="left:778.5px;top:314px;font-size:12px;transform:scaleX(0.86);transform-origin:0 0">FILE</div>
<div class="t" style="left:828.3px;top:314px;font-size:12px;letter-spacing:0.6px">0x0000</div>
<div class="a" style="left:5px;top:329px;width:833px;height:19px;background:#cce8ff"></div>
<div class="a" style="left:8px;top:329px;width:17px;height:16px"><svg width="17" height="16" viewBox="0 0 17 16"><defs><linearGradient id="ag" x1="0" y1="0" x2="0" y2="1"><stop offset="0" stop-color="#a8dcff"/><stop offset="0.3" stop-color="#3ea0ee"/><stop offset="0.65" stop-color="#70cbfa"/><stop offset="1" stop-color="#d4f3ff"/></linearGradient></defs><path d="M3.6 3.2L4.2 0.9L6.8 1.6Z" fill="#2a86dc"/><ellipse cx="8" cy="9" rx="7.7" ry="6.9" fill="url(#ag)" stroke="#2a7fd6" stroke-width="0.9"/><ellipse cx="8" cy="5.2" rx="5" ry="1.6" fill="#fff" opacity="0.55"/><g fill="#0a1a30"><rect x="8.4" y="7" width="1" height="1.2"/><rect x="8.4" y="8.8" width="1" height="1.2"/><rect x="12.4" y="7" width="1" height="1.2"/><rect x="12.4" y="8.8" width="1" height="1.2"/></g></svg></div>
<div class="t" style="left:29.599999999999994px;top:333px;font-size:12px;letter-spacing:0.423px">AliIM.exe *32</div>
<div class="t" style="left:153.3px;top:333px;font-size:12px;letter-spacing:0.225px">12092</div>
<div class="t" style="left:203.3px;top:333px;font-size:12px;letter-spacing:0.465px">C:\Program Files (x86)\AliWangWang\9.12.10C\log\...</div>
<div class="t" style="left:528.5px;top:333px;font-size:12px;letter-spacing:0.436px">C:\Program Files (x86)\AliWangWang\Al...</div>
<div class="t" style="left:778.5px;top:333px;font-size:12px;transform:scaleX(0.86);transform-origin:0 0">FILE</div>
<div class="t" style="left:828.3px;top:333px;font-size:12px;letter-spacing:0.6px">0x0000</div>
<div class="a" style="left:5px;top:348px;width:833px;height:19px;background:#cce8ff"></div>
<div class="a" style="left:200px;top:348px;width:324px;height:19px;border:1px dotted #222"></div>
<div class="a" style="left:8px;top:348px;width:17px;height:16px"><svg width="17" height="16" viewBox="0 0 17 16"><defs><linearGradient id="ag" x1="0" y1="0" x2="0" y2="1"><stop offset="0" stop-color="#a8dcff"/><stop offset="0.3" stop-color="#3ea0ee"/><stop offset="0.65" stop-color="#70cbfa"/><stop offset="1" stop-color="#d4f3ff"/></linearGradient></defs><path d="M3.6 3.2L4.2 0.9L6.8 1.6Z" fill="#2a86dc"/><ellipse cx="8" cy="9" rx="7.7" ry="6.9" fill="url(#ag)" stroke="#2a7fd6" stroke-width="0.9"/><ellipse cx="8" cy="5.2" rx="5" ry="1.6" fill="#fff" opacity="0.55"/><g fill="#0a1a30"><rect x="8.4" y="7" width="1" height="1.2"/><rect x="8.4" y="8.8" width="1" height="1.2"/><rect x="12.4" y="7" width="1" height="1.2"/><rect x="12.4" y="8.8" width="1" height="1.2"/></g></svg></div>
<div class="t" style="left:29.599999999999994px;top:352px;font-size:12px;letter-spacing:0.423px">AliIM.exe *32</div>
<div class="t" style="left:153.3px;top:352px;font-size:12px;letter-spacing:0.225px">12092</div>
<div class="t" style="left:203.3px;top:352px;font-size:12px;letter-spacing:0.468px">C:\Program Files (x86)\AliWangWang\9.12.10C\log\l...</div>
<div class="t" style="left:528.5px;top:352px;font-size:12px;letter-spacing:0.436px">C:\Program Files (x86)\AliWangWang\Al...</div>
<div class="t" style="left:778.5px;top:352px;font-size:12px;transform:scaleX(0.86);transform-origin:0 0">FILE</div>
<div class="t" style="left:828.3px;top:352px;font-size:12px;letter-spacing:0.6px">0x0000</div>
<div class="a" style="left:8px;top:367px;width:17px;height:16px"><svg width="17" height="16" viewBox="0 0 17 16"><defs><linearGradient id="ag" x1="0" y1="0" x2="0" y2="1"><stop offset="0" stop-color="#a8dcff"/><stop offset="0.3" stop-color="#3ea0ee"/><stop offset="0.65" stop-color="#70cbfa"/><stop offset="1" stop-color="#d4f3ff"/></linearGradient></defs><path d="M3.6 3.2L4.2 0.9L6.8 1.6Z" fill="#2a86dc"/><ellipse cx="8" cy="9" rx="7.7" ry="6.9" fill="url(#ag)" stroke="#2a7fd6" stroke-width="0.9"/><ellipse cx="8" cy="5.2" rx="5" ry="1.6" fill="#fff" opacity="0.55"/><g fill="#0a1a30"><rect x="8.4" y="7" width="1" height="1.2"/><rect x="8.4" y="8.8" width="1" height="1.2"/><rect x="12.4" y="7" width="1" height="1.2"/><rect x="12.4" y="8.8" width="1" height="1.2"/></g></svg></div>
<div class="t" style="left:29.599999999999994px;top:371px;font-size:12px;letter-spacing:0.423px">AliIM.exe *32</div>
<div class="t" style="left:153.3px;top:371px;font-size:12px;letter-spacing:0.225px">12092</div>
<div class="t" style="left:203.3px;top:371px;font-size:12px;letter-spacing:0.475px">C:\Program Files (x86)\AliWangWang\9.12.10C\log\w...</div>
<div class="t" style="left:528.5px;top:371px;font-size:12px;letter-spacing:0.436px">C:\Program Files (x86)\AliWangWang\Al...</div>
<div class="t" style="left:778.5px;top:371px;font-size:12px;transform:scaleX(0.86);transform-origin:0 0">FILE</div>
<div class="t" style="left:828.3px;top:371px;font-size:12px;letter-spacing:0.6px">0x0000</div>
<div class="a" style="left:8px;top:386px;width:17px;height:16px"><svg width="17" height="16" viewBox="0 0 17 16"><defs><linearGradient id="ag" x1="0" y1="0" x2="0" y2="1"><stop offset="0" stop-color="#a8dcff"/><stop offset="0.3" stop-color="#3ea0ee"/><stop offset="0.65" stop-color="#70cbfa"/><stop offset="1" stop-color="#d4f3ff"/></linearGradient></defs><path d="M3.6 3.2L4.2 0.9L6.8 1.6Z" fill="#2a86dc"/><ellipse cx="8" cy="9" rx="7.7" ry="6.9" fill="url(#ag)" stroke="#2a7fd6" stroke-width="0.9"/><ellipse cx="8" cy="5.2" rx="5" ry="1.6" fill="#fff" opacity="0.55"/><g fill="#0a1a30"><rect x="8.4" y="7" width="1" height="1.2"/><rect x="8.4" y="8.8" width="1" height="1.2"/><rect x="12.4" y="7" width="1" height="1.2"/><rect x="12.4" y="8.8" width="1" height="1.2"/></g></svg></div>
<div class="t" style="left:29.599999999999994px;top:390px;font-size:12px;letter-spacing:0.423px">AliIM.exe *32</div>
<div class="t" style="left:153.3px;top:390px;font-size:12px;letter-spacing:0.225px">12092</div>
<div class="t" style="left:203.3px;top:390px;font-size:12px;letter-spacing:0.514px">C:\Program Files (x86)\AliWangWang\9.12.10C\log\T...</div>
<div class="t" style="left:528.5px;top:390px;font-size:12px;letter-spacing:0.436px">C:\Program Files (x86)\AliWangWang\Al...</div>
<div class="t" style="left:778.5px;top:390px;font-size:12px;transform:scaleX(0.86);transform-origin:0 0">FILE</div>
<div class="t" style="left:828.3px;top:390px;font-size:12px;letter-spacing:0.6px">0x0000</div>
</div>
<div class="a" style="left:998px;top:147px;width:16px;height:400px;background:#f0f0f0"></div>
<div class="a" style="left:998px;top:235px;width:16px;height:18px;background:#cdcdcd"></div>
<svg class="a" style="left:1001px;top:152px" width="10" height="8" viewBox="0 0 10 8"><path d="M1.2 6.2L5 2.4L8.8 6.2" fill="none" stroke="#606060" stroke-width="2.2"/></svg>
<svg class="a" style="left:1001px;top:534px" width="10" height="8" viewBox="0 0 10 8"><path d="M1.2 1.8L5 5.6L8.8 1.8" fill="none" stroke="#606060" stroke-width="2.2"/></svg>
<div class="a" style="left:160px;top:547px;width:838px;height:16px;background:#f0f0f0"></div>
<div class="a" style="left:177px;top:547px;width:643px;height:16px;background:#cdcdcd"></div>
<div class="a" style="left:998px;top:547px;width:16px;height:16px;background:#f0f0f0"></div>
<svg class="a" style="left:163px;top:550px" width="8" height="10" viewBox="0 0 8 10"><path d="M6 1.2L2.2 5L6 8.8" fill="none" stroke="#606060" stroke-width="2.2"/></svg>
<svg class="a" style="left:985px;top:550px" width="8" height="10" viewBox="0 0 8 10"><path d="M2 1.2L5.8 5L2 8.8" fill="none" stroke="#606060" stroke-width="2.2"/></svg>
<div class="t" style="left:164px;top:576px;font-size:12px">路径<span class="m">:</span></div>
<div class="a" style="left:206px;top:570px;width:300px;height:23px;background:#fff;border:1px solid #7a7a7a"></div>
<div class="t" style="left:208.5px;top:576.5px;font-family:'Liberation Mono',monospace;font-size:12px;transform:scaleX(0.833);transform-origin:0 0;color:#111">C:\Program Files (x86)</div>
<div class="a" style="left:513px;top:571px;width:73px;height:21px;background:#e1e1e1;border:1px solid #adadad"></div>
<div class="t" style="left:513px;top:576px;width:73px;text-align:center;">查看占用<span class="m">(<u>S</u>)</span></div>
<div class="a" style="left:769px;top:570px;width:1px;height:23px;background:#a0a0a0"></div>
<div class="a" style="left:770px;top:570px;width:1px;height:1px;background:#a0a0a0"></div>
<div class="a" style="left:779px;top:571px;width:73px;height:21px;background:#e1e1e1;border:1px solid #adadad"></div>
<div class="t" style="left:779px;top:576px;width:73px;text-align:center;">解锁<span class="m">(<u>U</u>)</span></div>
<div class="a" style="left:860px;top:571px;width:73px;height:21px;background:#e1e1e1;border:1px solid #adadad"></div>
<div class="t" style="left:860px;top:576px;width:73px;text-align:center;">解锁全部<span class="m">(<u>A</u>)</span></div>
<div class="a" style="left:941px;top:571px;width:73px;height:21px;background:#e1e1e1;border:1px solid #adadad"></div>
<div class="t" style="left:941px;top:576px;width:73px;text-align:center;">结束进程<span class="m">(<u>K</u>)</span></div>
<div class="t" style="left:155.5px;top:613px;color:#007000"><span class="m">[</span>内核模式<span class="m">] </span>进入内核模式成功<span class="m">...</span></div>
<div class="a" style="left:944px;top:608px;width:78px;height:21px;background:#e1e1e1;border:1px solid #adadad"></div>
<div class="t" style="left:944px;top:613px;width:78px;text-align:center;transform:scaleY(1.15);transform-origin:50% 50%">退出内核模式</div>
<svg class="a" style="left:8px;top:650px" width="16" height="14" viewBox="0 0 16 14"><rect x="0" y="0" width="16" height="14" fill="#000"/><rect x="1.4" y="1.4" width="13.2" height="11.2" fill="none" stroke="#c8c8c8" stroke-width="0.8"/><path d="M4.2 4.3L6.6 6.5L4.2 8.7" fill="none" stroke="#ddd" stroke-width="1"/><path d="M7.9 8.6H10.9" stroke="#ddd" stroke-width="1"/></svg>
<div class="a" style="left:30px;top:651px;width:1px;height:13px;background:#cfcfcf"></div>
<svg class="a" style="left:40px;top:650px" width="11" height="15" viewBox="0 0 11 15"><path d="M0 0H7.2L11 3.8V15H0Z" fill="#c3caca"/><path d="M7.2 0V3.8H11Z" fill="#a9b4b4"/><g transform="translate(5.4 8)" fill="#8d9b9b"><circle r="2.6"/><rect x="-0.8" y="-3.8" width="1.6" height="7.6"/><rect x="-3.8" y="-0.8" width="7.6" height="1.6"/><rect x="-0.8" y="-3.8" width="1.6" height="7.6" transform="rotate(45)"/><rect x="-0.8" y="-3.8" width="1.6" height="7.6" transform="rotate(-45)"/></g><circle cx="5.4" cy="8" r="1" fill="#c3caca"/></svg>
<svg class="a" style="left:60px;top:650px" width="16" height="16" viewBox="0 0 16 16"><defs><linearGradient id="dk" x1="0" y1="0" x2="0" y2="1"><stop offset="0" stop-color="#9a9a9a"/><stop offset="0.45" stop-color="#555"/><stop offset="1" stop-color="#1e1e1e"/></linearGradient></defs><path d="M5 2.4L8.6 0.6L12.2 2.4V6.6L8.6 8.4L5 6.6Z" fill="#d4d6da"/><path d="M5 2.4L8.6 4.2L12.2 2.4" fill="none" stroke="#9a9a9a" stroke-width="0.6"/><path d="M0.6 7.2L4.4 5.4L8 7.2V11.8L4.4 13.6L0.6 11.8Z" fill="url(#dk)"/><path d="M8.5 9L12.2 7.1L15.8 9V13.2L12.2 15.2L8.5 13.2Z" fill="#e9ebf0" stroke="#a9adb5" stroke-width="0.6"/></svg>
<svg class="a" style="left:87px;top:651px" width="10" height="13" viewBox="0 0 10 13"><defs><linearGradient id="cg" x1="0" y1="0" x2="1" y2="0"><stop offset="0" stop-color="#1e1e1e"/><stop offset="0.5" stop-color="#4a4a4a"/><stop offset="1" stop-color="#1e1e1e"/></linearGradient></defs><rect x="1.4" y="0.9" width="6.6" height="11.8" rx="1.2" fill="url(#cg)"/><g fill="#262626"><rect x="0" y="1.5" width="9.4" height="1.5" rx="0.75"/><rect x="0" y="4.5" width="9.4" height="1.5" rx="0.75"/><rect x="0" y="7.5" width="9.4" height="1.5" rx="0.75"/><rect x="0" y="10.4" width="9.4" height="1.6" rx="0.8"/></g></svg>
<div class="a" style="left:105px;top:651px;width:1px;height:13px;background:#cfcfcf"></div>
<div class="t" style="left:109.0px;top:652px;;letter-spacing:-0.000px">CPU使用:2.86%</div>
<div class="t" style="left:201.89999999999998px;top:652px;;letter-spacing:0.014px">内存使用:50.72%</div>
<div class="t" style="left:300.09999999999997px;top:652px;;letter-spacing:0.163px">进程数:272</div>
<div class="t" style="left:366.09999999999997px;top:652px;;letter-spacing:0.184px">线程数:4459</div>
<div class="t" style="left:439.0px;top:652px;;letter-spacing:0.290px">句柄数:147311</div>
<div class="a" style="left:198px;top:650px;width:1px;height:14px;background:#cfcfcf"></div>
<div class="a" style="left:296px;top:650px;width:1px;height:14px;background:#cfcfcf"></div>
<div class="a" style="left:363px;top:650px;width:1px;height:14px;background:#cfcfcf"></div>
<div class="a" style="left:435px;top:650px;width:1px;height:14px;background:#cfcfcf"></div>
<div class="t" style="left:945.5px;top:651px;color:#0000ff;text-decoration:underline;letter-spacing:0.314px">Github开源项目</div>
</body></html>
